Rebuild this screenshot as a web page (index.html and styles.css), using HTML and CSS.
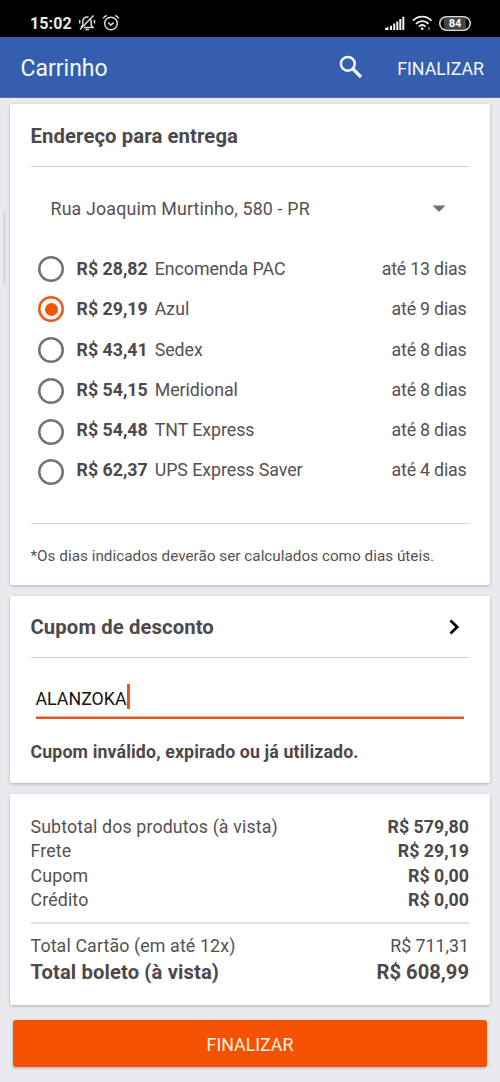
FILE: index.html
```html
<!DOCTYPE html>
<html lang="pt-BR">
<head>
<meta charset="utf-8">
<title>Carrinho</title>
<link rel="stylesheet" href="styles.css">
</head>
<body>
<div class="status">
  <span class="clock">15:02</span>
  <svg class="mute" width="18" height="18" viewBox="0 0 18 18" fill="none" stroke="#d8d8d8" stroke-width="1.500"><path d="M6 13.500h9l-1.800-2.200V8c0-1.500-.3-2.500-1.200-3.500M10.500 3.300C7 2.300 4.800 4.500 4.800 7.500v3.500L3 13.500"/><path d="M7.300 15.500h3.600M2 15.500L15.500 1.500M1.700 6v3.500M16.500 6v3.500"/></svg>
  <svg class="alarm" width="18" height="18" viewBox="0 0 18 18" fill="none" stroke="#d8d8d8" stroke-width="1.500"><circle cx="9" cy="9.500" r="6.300"/><path d="M6.200 8.600L8.800 11l3-2.400M1.300 4.500C2 3 3.200 2 4.800 1.500M16.700 4.500C16 3 14.800 2 13.200 1.500"/></svg>
  <div class="signals">
    <svg class="bars" width="20" height="15" viewBox="0 0 20 15" fill="#f0f0f0"><path d="M0 12.300l3.500-1.500V14H0zM5 9.800h2V14H5zM8.200 7.600h2V14h-2zM11.300 5.400h2V14h-2zM14.300 3h2v11h-2zM17.300.8h2V14h-2z"/></svg>
    <svg class="wifi" width="21" height="16" viewBox="0 0 21 16" fill="none" stroke="#f0f0f0" stroke-width="1.900"><path d="M1 5.700C6.200.3 14.300.3 19.500 5.700M4 8.900c3.600-3.700 8.900-3.700 12.500 0M7 11.600c2-1.900 4.500-1.900 6.500 0"/><circle cx="10.200" cy="13.700" r="1.300" fill="#f0f0f0" stroke="none"/><path d="M17 12v3" stroke-width="1.200" stroke="#aaa"/></svg>
    <span class="battery"><span class="level">84</span></span>
  </div>
</div>
<header class="appbar">
  <h1 class="title">Carrinho</h1>
  <svg class="search" width="24" height="24" viewBox="0 0 24 24" fill="none" stroke="#f2f8ff"><circle cx="8.800" cy="8.800" r="6.900" stroke-width="2.500"/><path d="M14 14l8 8" stroke-width="3.200"/></svg>
  <span class="action">FINALIZAR</span>
</header>
<main class="content">
  <i class="scroll"></i>
  <section class="card delivery">
    <h2 class="heading"><span>Endereço para entrega</span></h2>
    <div class="select"><span class="address">Rua Joaquim Murtinho, 580 - PR</span><svg width="14" height="8" viewBox="0 0 14 8"><path d="M.5.500h13L7 7z" fill="#727272"/></svg></div>
    <div class="options">
      <div class="radios"><i class="radio"></i><i class="radio on"></i><i class="radio"></i><i class="radio"></i><i class="radio"></i><i class="radio"></i></div>
      <div class="rates">
        <div class="rate"><b>R$ 28,82</b><span>Encomenda PAC</span><em>até 13 dias</em></div>
        <div class="rate"><b>R$ 29,19</b><span>Azul</span><em>até 9 dias</em></div>
        <div class="rate"><b>R$ 43,41</b><span>Sedex</span><em>até 8 dias</em></div>
        <div class="rate"><b>R$ 54,15</b><span>Meridional</span><em>até 8 dias</em></div>
        <div class="rate"><b>R$ 54,48</b><span>TNT Express</span><em>até 8 dias</em></div>
        <div class="rate"><b>R$ 62,37</b><span>UPS Express Saver</span><em>até 4 dias</em></div>
      </div>
    </div>
    <p class="note">*Os dias indicados deverão ser calculados como dias úteis.</p>
  </section>
  <section class="card coupon">
    <h2 class="heading"><span>Cupom de desconto</span><svg width="11" height="16" viewBox="0 0 11 16" fill="none" stroke="#000" stroke-width="2.700"><path d="M1.500 1.500L8.200 8l-6.700 6.500"/></svg></h2>
    <div class="field"><span class="code">ALANZOKA</span><i class="caret"></i></div>
    <p class="error">Cupom inválido, expirado ou já utilizado.</p>
  </section>
  <section class="card summary">
    <div class="line"><span class="label">Subtotal dos produtos (à vista)</span><b>R$ 579,80</b></div>
    <div class="line"><span class="label">Frete</span><b>R$ 29,19</b></div>
    <div class="line"><span class="label">Cupom</span><b>R$ 0,00</b></div>
    <div class="line"><span class="label">Crédito</span><b>R$ 0,00</b></div>
    <div class="totals">
      <div class="line"><span class="label">Total Cartão (em até 12x)</span><span>R$ 711,31</span></div>
      <div class="line grand"><b class="label">Total boleto (à vista)</b><b>R$ 608,99</b></div>
    </div>
  </section>
  <button class="submit">FINALIZAR</button>
</main>
</body>
</html>
```

FILE: styles.css
```css
* { box-sizing: border-box; }
body { margin: 0; width: 500px; height: 1082px; overflow: hidden; background: #e9eaee; color: #565053; font: 17.8px/24px Roboto, sans-serif; }
h1, h2, p { margin: 0; }
svg { display: block; flex: none; }
b, h2 { font-weight: 700; color: #4e474b; }
em, i { font-style: normal; }
span, b, em { white-space: nowrap; }

.status { display: flex; align-items: center; height: 37px; padding: 9px 29px 0 30px; background: #000; }
.clock { color: #e8e8e8; font-size: 16px; font-weight: 700; letter-spacing: .1px; width: 48px; padding-top: 1px; }
.alarm { margin-left: 6px; }
.signals { display: flex; align-items: center; margin-left: auto; }
.bars { margin-right: 1px; }
.wifi { margin-left: 6px; }
.battery { display: flex; width: 32px; height: 15px; margin-left: 6px; padding: 2px 5px; box-shadow: inset 0 0 0 1.5px #d9d9d9; border-radius: 8px; }
.level { flex: 1; background: #444; color: #fff; font-size: 11px; font-weight: 700; line-height: 12px; text-align: center; }

.appbar { display: flex; align-items: center; height: 61px; padding: 0 16px 0 20.5px; background: #355fae; border-bottom: 1px solid #5272ad; color: #f2f8ff; }
.title { flex: 1; font-size: 23px; font-weight: 400; padding-top: 3px; }
.search { margin-right: 34px; }
.action { font-size: 17.8px; padding-top: 3px; }

.content { position: relative; padding: 6px 10px 0; display: flex; flex-direction: column; gap: 11px; }
.scroll { position: absolute; left: 3px; top: 114px; width: 3px; height: 73px; border-radius: 2px; background: #d6d9dc; }
.card { background: #fff; border-radius: 2px; padding: 0 21px 0 20.5px; box-shadow: 0 1px 3px rgba(50, 50, 70, .32); }
.heading { display: flex; align-items: center; justify-content: space-between; height: 63px; border-bottom: 1px solid #d2d2d2; font-size: 20.3px; letter-spacing: .1px; }

.delivery { height: 481px; }
.delivery .heading { padding-top: 2px; }
.select { display: flex; align-items: center; justify-content: space-between; height: 84px; padding: 0 23px 0 20px; }
.address { letter-spacing: .17px; }
.options { display: flex; height: 273px; padding: 0 2.5px 0 7.5px; border-bottom: 1px solid #d2d2d2; }
.radios { display: flex; flex-direction: column; gap: 14.7px; padding-top: 4.8px; }
.radio { width: 26px; height: 26px; box-shadow: inset 0 0 0 2.5px #737373; border-radius: 50%; }
.on { display: grid; place-items: center; box-shadow: inset 0 0 0 2.5px #ed5a19; }
.on::before { content: ""; width: 13px; height: 13px; border-radius: 50%; background: #f65300; }
.rates { flex: 1; margin: -2px 0 0 12.5px; }
.rate { display: flex; align-items: center; height: 40.25px; }
.rate span { margin-left: 7px; letter-spacing: -.05px; }
.rate em { margin-left: auto; letter-spacing: -.2px; }
.note { font-size: 15.3px; line-height: 64px; white-space: nowrap; }

.coupon { height: 187px; }
.coupon .heading { height: 62px; }
.coupon .heading svg { margin-right: 9px; }
.field { display: flex; align-items: center; height: 61px; margin: 0 5px; padding-top: 19px; color: #111; box-shadow: inset 0 -2.5px #e5571c; }
.code { padding-top: 2px; }
.caret { width: 3px; height: 25px; margin-bottom: 3px; background: #e5571c; }
.error { font-weight: 700; color: #4e474b; line-height: 66px; white-space: nowrap; letter-spacing: .12px; }

.summary { height: 211px; padding-top: 20.6px; }
.line { display: flex; align-items: center; justify-content: space-between; height: 24.5px; }
.label { letter-spacing: .13px; }
.totals { margin-top: 9.4px; padding-top: 10px; border-top: 2px solid #dfdfe1; }
.grand { height: 27px; font-size: 20.2px; }

.submit { height: 47px; margin: 4px 3px 0; padding: 1px 0 0; border: 0; border-radius: 3px; background: #f45100; color: #fff3e5; font: 17.8px Roboto, sans-serif; box-shadow: 0 1px 3px rgba(50, 50, 70, .35); }
```
